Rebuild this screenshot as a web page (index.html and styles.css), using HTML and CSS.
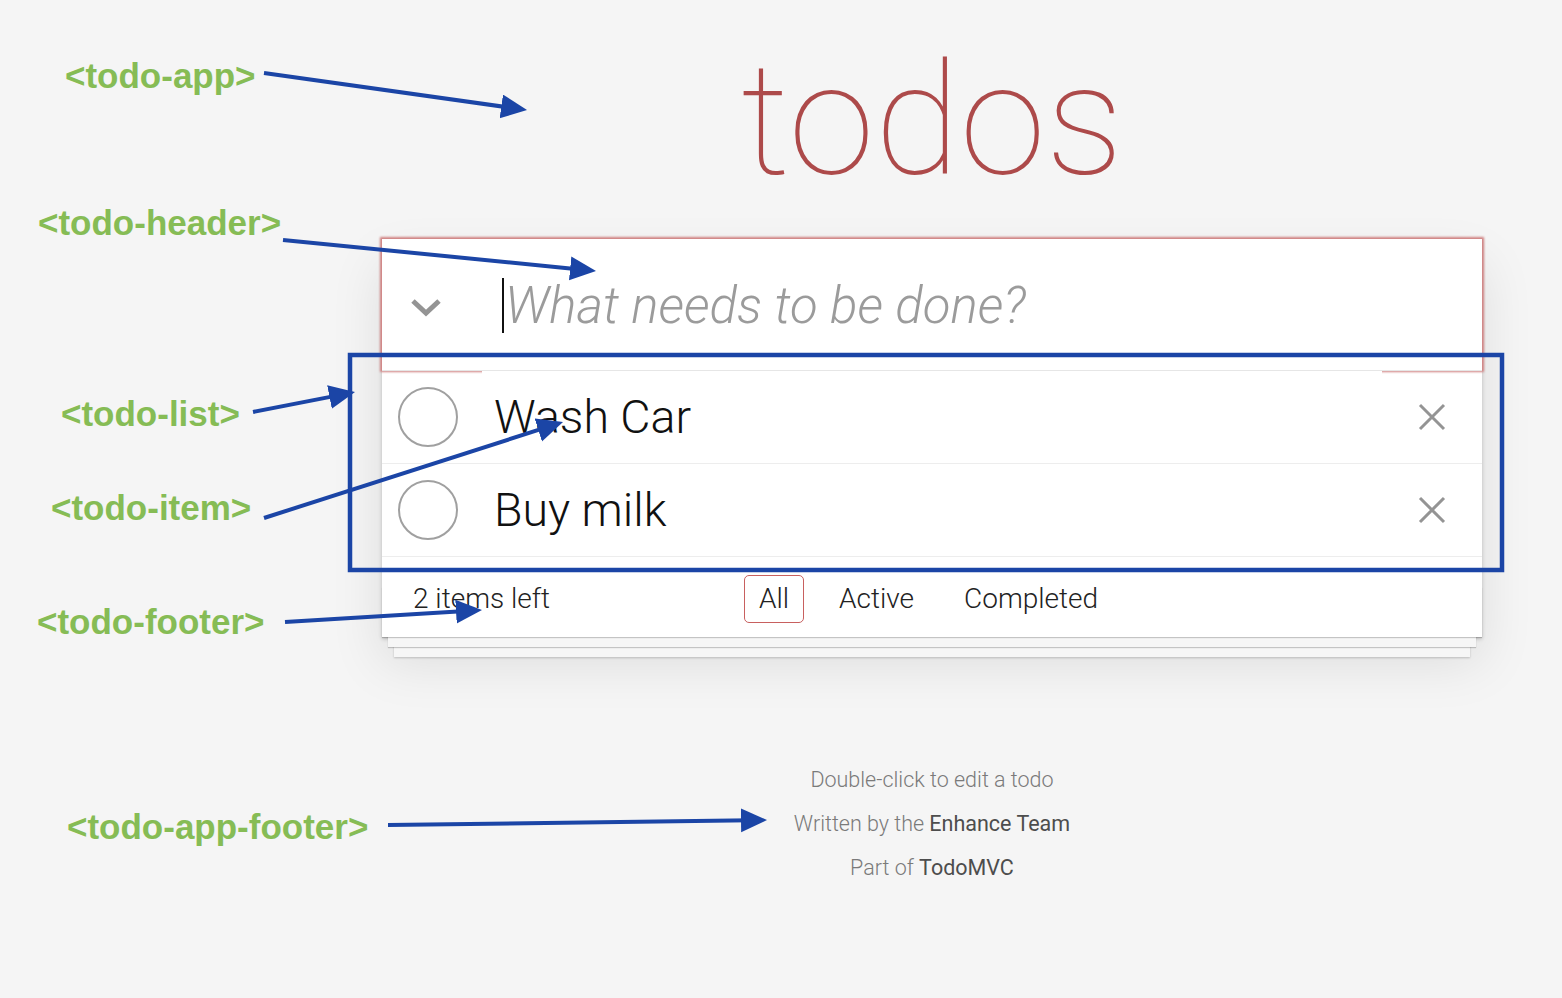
FILE: index.html
```html
<!DOCTYPE html>
<html lang="en">
<head>
<meta charset="utf-8">
<title>TodoMVC – Enhance components</title>
<link rel="stylesheet" href="styles.css">
</head>
<body>
<div class="page">
  <section class="todoapp">
    <h1 class="title">todos</h1>
    <div class="card">
      <header class="header">
        <span class="toggle-all">
          <svg width="32" height="20" viewBox="0 0 32 20"><polyline points="3,3 16,15 29,3" fill="none" stroke="#949494" stroke-width="5"/></svg>
        </span>
        <div class="new-todo"><span class="caret"></span><span class="placeholder">What needs to be done?</span></div>
      </header>
      <section class="main">
        <ul class="todo-list">
          <li class="todo">
            <span class="toggle-cell"><span class="toggle"></span></span>
            <span class="label">Wash Car</span>
            <span class="destroy"><svg width="28" height="28" viewBox="0 0 28 28"><path d="M2 2 L26 26 M26 2 L2 26" stroke="#949494" stroke-width="3" fill="none"/></svg></span>
          </li>
          <li class="todo">
            <span class="toggle-cell"><span class="toggle"></span></span>
            <span class="label">Buy milk</span>
            <span class="destroy"><svg width="28" height="28" viewBox="0 0 28 28"><path d="M2 2 L26 26 M26 2 L2 26" stroke="#949494" stroke-width="3" fill="none"/></svg></span>
          </li>
        </ul>
      </section>
      <footer class="footer">
        <span class="todo-count">2 items left</span>
        <ul class="filters">
          <li><a class="filter selected">All</a></li>
          <li><a class="filter">Active</a></li>
          <li><a class="filter">Completed</a></li>
        </ul>
      </footer>
    </div>
  </section>
  <footer class="info">
    <p>Double-click to edit a todo</p>
    <p>Written by the <strong>Enhance Team</strong></p>
    <p>Part of <strong>TodoMVC</strong></p>
  </footer>
</div>

<div class="annotations">
  <svg class="overlay" width="1562" height="998" viewBox="0 0 1562 998">
    <defs>
      <marker id="head" markerUnits="userSpaceOnUse" markerWidth="28" markerHeight="26" refX="10" refY="12" orient="auto">
        <path d="M0,0 L26,12 L0,24 z" fill="#1b45a6"/>
      </marker>
    </defs>
    <rect x="350" y="355" width="1152" height="215" fill="none" stroke="#1b45a6" stroke-width="4.5"/>
    <g stroke="#1b45a6" stroke-width="4" marker-end="url(#head)">
      <line x1="264" y1="73" x2="511.2" y2="107.8"/>
      <line x1="283" y1="240" x2="580.1" y2="269.4"/>
      <line x1="253" y1="412" x2="339.3" y2="395.1"/>
      <line x1="264" y1="518" x2="547.8" y2="426.9"/>
      <line x1="285" y1="622" x2="466" y2="611"/>
      <line x1="388" y1="825" x2="751" y2="820.2"/>
    </g>
  </svg>
  <span class="tag tag-app">&lt;todo-app&gt;</span>
  <span class="tag tag-header">&lt;todo-header&gt;</span>
  <span class="tag tag-list">&lt;todo-list&gt;</span>
  <span class="tag tag-item">&lt;todo-item&gt;</span>
  <span class="tag tag-footer">&lt;todo-footer&gt;</span>
  <span class="tag tag-appfooter">&lt;todo-app-footer&gt;</span>
</div>
</body>
</html>
```

FILE: styles.css
```css
html, body {
  margin: 0;
  padding: 0;
}

body {
  background: #f5f5f5;
  font-family: Roboto, "Liberation Sans", Arial, sans-serif;
  font-weight: 300;
  color: #111;
  width: 1562px;
  height: 998px;
  overflow: hidden;
  position: relative;
}

.page {
  padding-left: 382px;
  padding-top: 43px;
  width: 1100px;
}

.title {
  margin: 0 0 42px;
  font-size: 156px;
  line-height: 154px;
  font-weight: 100;
  color: #ad4a4a;
  text-align: center;
}

.card {
  position: relative;
  background: #fff;
  box-shadow: 0 2px 4px rgba(0, 0, 0, 0.2), 0 25px 50px rgba(0, 0, 0, 0.1);
}

/* header */
.header {
  position: relative;
  z-index: 1;
  display: flex;
  align-items: center;
  height: 131px;
  background: #fff;
  box-shadow: 0 0 2px 2px #d08383;
}

.toggle-all {
  width: 100px;
  display: flex;
  padding-left: 28px;
  box-sizing: border-box;
  margin-top: 6px;
}

.new-todo {
  flex: 1;
  display: flex;
  align-items: center;
  padding-left: 20px;
  margin-top: 2px;
}

.caret {
  width: 2px;
  height: 55px;
  background: #111;
  margin-right: 1px;
}

.placeholder {
  font-style: italic;
  font-weight: 300;
  font-size: 51px;
  color: #9b9b9b;
}

/* list */
.main {
  position: relative;
  z-index: 2;
  border-top: 1px solid #e6e6e6;
}

.todo-list {
  list-style: none;
  margin: 0;
  padding: 0;
}

.todo {
  display: flex;
  align-items: stretch;
  height: 92px;
  border-bottom: 1px solid #ededed;
}

.toggle-cell {
  width: 100px;
  display: flex;
  align-items: center;
  padding-left: 16px;
  box-sizing: border-box;
  background: #fff;
}

.main .todo:first-child .toggle-cell {
  background: transparent;
}

.toggle {
  width: 56px;
  height: 56px;
  border: 2px solid #a0a0a0;
  border-radius: 50%;
}

.label {
  flex: 1;
  display: flex;
  align-items: center;
  padding-left: 12px;
  background: #fff;
  font-size: 46.5px;
  font-weight: 300;
  color: #111;
}

.destroy {
  width: 100px;
  display: flex;
  align-items: center;
  justify-content: center;
  background: #fff;
}

.main .todo:first-child .destroy {
  background: transparent;
}

/* footer */
.footer {
  position: relative;
  display: flex;
  align-items: center;
  height: 80px;
  padding-left: 31px;
  padding-top: 3px;
  box-sizing: border-box;
  font-size: 28px;
  color: #222;
}

.footer::before {
  content: "";
  position: absolute;
  left: 0;
  right: 0;
  bottom: 0;
  height: 50px;
  box-shadow: 0 1px 1px rgba(0, 0, 0, 0.2),
    0 16px 0 -6px #f6f6f6,
    0 17px 1px -6px rgba(0, 0, 0, 0.2),
    0 32px 0 -12px #f6f6f6,
    0 33px 2px -12px rgba(0, 0, 0, 0.2);
  pointer-events: none;
}

.todo-count {
  width: 331px;
}

.filters {
  list-style: none;
  margin: 0;
  padding: 0;
  display: flex;
  gap: 20px;
}

.filter {
  display: flex;
  align-items: center;
  height: 46px;
  padding: 0 14px;
  border: 1.5px solid transparent;
  border-radius: 5px;
  color: #222;
}

.filter.selected {
  border-color: #c8605f;
}

/* info */
.info {
  margin-top: 121px;
  text-align: center;
  font-size: 21.5px;
  color: #7a7a7a;
}

.info p {
  margin: 0;
  line-height: 44px;
}

.info strong {
  font-weight: 400;
  color: #4d4d4d;
}

/* annotations */
.annotations {
  position: absolute;
  z-index: 10;
  left: 0;
  top: 0;
  width: 1562px;
  height: 998px;
  pointer-events: none;
}

.overlay {
  position: absolute;
  left: 0;
  top: 0;
}

.tag {
  position: absolute;
  font-family: "Liberation Sans", Arial, sans-serif;
  font-weight: 700;
  font-size: 35px;
  line-height: 35px;
  color: #86bc55;
  white-space: nowrap;
}

.tag-app { left: 65px; top: 58px; }
.tag-header { left: 38px; top: 205px; }
.tag-list { left: 61px; top: 396px; }
.tag-item { left: 51px; top: 490px; }
.tag-footer { left: 37px; top: 604px; }
.tag-appfooter { left: 67px; top: 809px; }
```
